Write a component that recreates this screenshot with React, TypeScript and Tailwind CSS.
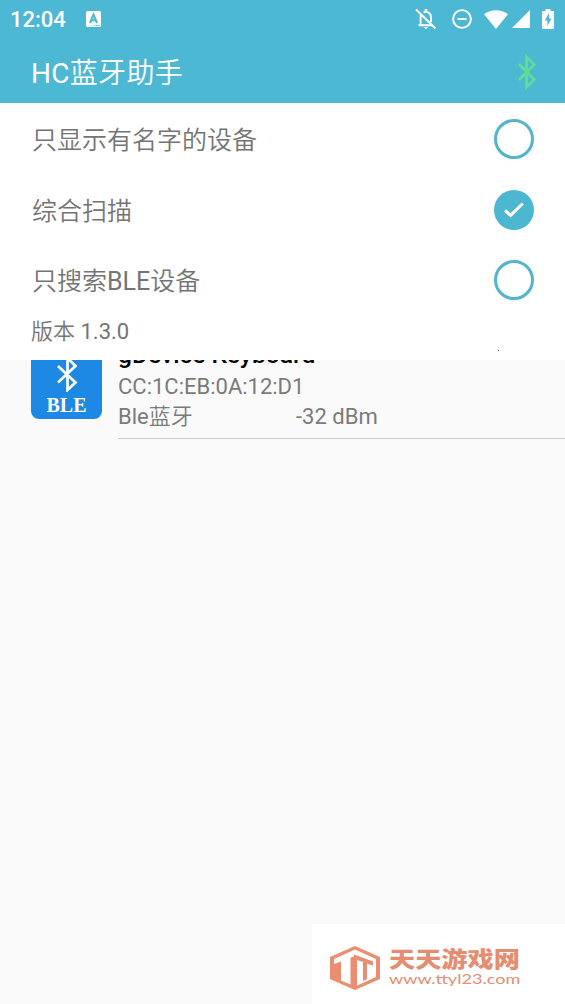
import React from "react";

const options = [
  { zh: "只显示有名字的设备", latin: "", rest: "", checked: false },
  { zh: "综合扫描", latin: "", rest: "", checked: true },
  { zh: "只搜索", latin: "BLE", rest: "设备", checked: false },
];

function StatusBar() {
  return (
    <div className="flex h-10 items-center justify-between pl-[10px] pr-[10px] text-white">
      <div className="flex items-center">
        <span className="w-[76px] text-[22px] font-medium leading-none">12:04</span>
        <svg className="mb-[2px] h-4 w-[15px]" viewBox="0 0 15 16">
          <rect width="15" height="16" rx="1.5" fill="white" />
          <path d="M4 12 7.5 3.7 11 12M5.4 9.3h4.2" fill="none" stroke="#4db8d3" strokeWidth="2.1" />
          <path d="M8 14.4h6" stroke="#4db8d3" strokeWidth="1" strokeDasharray="1.4 .7" />
        </svg>
      </div>
      <div className="mb-[2px] flex items-center">
        {/* muted bell */}
        <svg className="mr-[15px] h-[22px] w-[22px]" viewBox="0 0 22 22" fill="none" stroke="white" strokeWidth="1.9">
          <path d="M1 1.5 20.5 20.5" />
          <path d="M3.5 17.2h14M5.6 17V8.8Q5.6 7.2 6.4 6M8.5 4.5C12 2.8 16 5.2 16 9v5" />
          <path d="M11 1v3" strokeWidth="2.6" />
          <path d="M8.8 19.2h4.4L11 21.2z" fill="white" stroke="none" />
        </svg>
        {/* do not disturb */}
        <svg className="mr-3 h-5 w-5" viewBox="0 0 20 20" fill="none" stroke="white" strokeWidth="1.9">
          <circle cx="10" cy="10" r="8.9" />
          <path d="M5.4 10h9.2" />
        </svg>
        <svg className="mr-[4px] h-[19px] w-6" viewBox="0 0 24 19">
          <path d="M0 4.3C7-1.1 17-1.1 24 4.3L12 19z" fill="white" />
        </svg>
        <svg className="mr-[12px] h-[18px] w-[18px]" viewBox="0 0 18 18">
          <path d="M18 0v18H0z" fill="white" />
        </svg>
        <svg className="mr-px h-5 w-[12px]" viewBox="0 0 12 20">
          <path d="M3.5 0h5v2H12v18H0V2h3.5z" fill="white" />
          <path d="M7 4 2.8 11.4h2.6V17l4-7.5H7z" fill="#4db8d3" />
        </svg>
      </div>
    </div>
  );
}

function Header() {
  return (
    <div className="flex h-[63px] items-center justify-between pl-[31px] pr-[28px]">
      <h1 className="pt-1 text-[28px] font-[350] leading-none tracking-[0.3px] text-white">
        <span className="font-normal">HC</span>蓝牙助手
      </h1>
      <svg className="h-9 w-[20px]" viewBox="0 0 20 36" fill="none" stroke="#62dc91" strokeWidth="2.8">
        <path d="M2 10 17.2 25.4 9.6 33V3l7.6 7.6L2 26" />
      </svg>
    </div>
  );
}

function Check({ checked }: { checked: boolean }) {
  if (!checked) {
    return <div className="h-10 w-10 rounded-full border-[3.5px] border-[#55b4cb]" />;
  }
  return (
    <div className="flex h-10 w-10 items-center justify-center rounded-full bg-[#4db6d0]">
      <svg className="h-4 w-5" viewBox="0 0 20 16" fill="none" stroke="white" strokeWidth="3">
        <path d="M1 8.3 6.6 13.4 18.8 1.5" />
      </svg>
    </div>
  );
}

function FilterPanel() {
  return (
    <div className="h-[257px] bg-white pt-px text-[#747474]">
      {options.map((o) => (
        <div key={o.zh} className="flex h-[70.4px] items-center justify-between pl-8 pr-[31px]">
          <span className="pt-[3px] text-[25px] font-[350] leading-none">
            {o.zh}
            <span className="font-normal">{o.latin}</span>
            {o.rest}
          </span>
          <Check checked={o.checked} />
        </div>
      ))}
      <div className="flex h-[33px] items-center justify-between pl-[31px] pr-[66px]">
        <span className="text-[22px] font-[350] leading-none">
          版本<span className="font-normal"> 1.3.0</span>
        </span>
        <span className="mt-[38px] h-px w-px bg-[#555]" />
      </div>
    </div>
  );
}

function DeviceRow() {
  return (
    <div className="flex h-[79px] items-end overflow-hidden pl-[31px]">
      <div className="mb-5 flex h-[71px] w-[71px] shrink-0 flex-col items-center justify-end rounded-lg bg-[#1e88e5] text-white">
        <svg className="h-9 w-[22px] shrink-0" viewBox="0 0 22 36" fill="none" stroke="white" strokeWidth="2.7">
          <path d="M2 10 19.5 26.5 11.5 34V2l8 8L2 26.5" />
        </svg>
        <span className="mb-[3px] mt-px scale-y-[1.08] font-['Liberation_Serif',serif] text-[20px] font-bold leading-[23px]">BLE</span>
      </div>
      <div className="ml-4 flex-1 border-b border-[#ccc] pb-[6px] text-[22px] text-[#7a7a7a]">
        <div className="-translate-y-[2px] text-[24.6px] font-medium leading-[30px] text-black">gDevice Keyboard</div>
        <div className="leading-[30px]">CC:1C:EB:0A:12:D1</div>
        <div className="flex leading-[30px]">
          <span className="w-[178px]">
            Ble<span className="font-[350]">蓝牙</span>
          </span>
          <span>-32 dBm</span>
        </div>
      </div>
    </div>
  );
}

function SiteBadge() {
  return (
    <div className="mt-auto flex h-20 w-[253px] items-center self-end bg-white pl-[18px] pt-[7px]">
      <svg className="h-11 w-[50px] shrink-0" viewBox="0 0 50 44">
        <path d="M25 0 50 11v22L25 44 0 33V11z" fill="#ea8d70" />
        <path d="M4 13 25 3.4V10l-4.5 1.8v26.7L11 34.5V15.5L4 18z" fill="white" />
        <path d="M25 3.4 46 13v18l-21 9.5z" fill="white" />
        <path d="M24 8.5 43 15.5v4.3l-6-2.2v15.6l-4 1.8V16l-6-2.1V40L24 41z" fill="#ea8d70" />
      </svg>
      <div className="ml-[9px] w-[132px] text-[#e58d72]">
        <div className="w-[115px] origin-left scale-x-[1.19] pt-px text-[22px] font-black leading-[22px]">天天游戏网</div>
        <div className="w-[110px] origin-left scale-x-[1.34] font-[Lato,sans-serif] text-[13.5px] leading-[16px]">www.ttyl23.com</div>
      </div>
    </div>
  );
}

export default function App() {
  return (
    <div className="flex h-[1004px] w-[565px] flex-col overflow-hidden bg-[#fafafa] font-[Roboto,'Noto_Sans_CJK_SC',sans-serif]">
      <div className="h-[103px] shrink-0 bg-[#4db8d3]">
        <StatusBar />
        <Header />
      </div>
      <FilterPanel />
      <DeviceRow />
      <SiteBadge />
    </div>
  );
}
